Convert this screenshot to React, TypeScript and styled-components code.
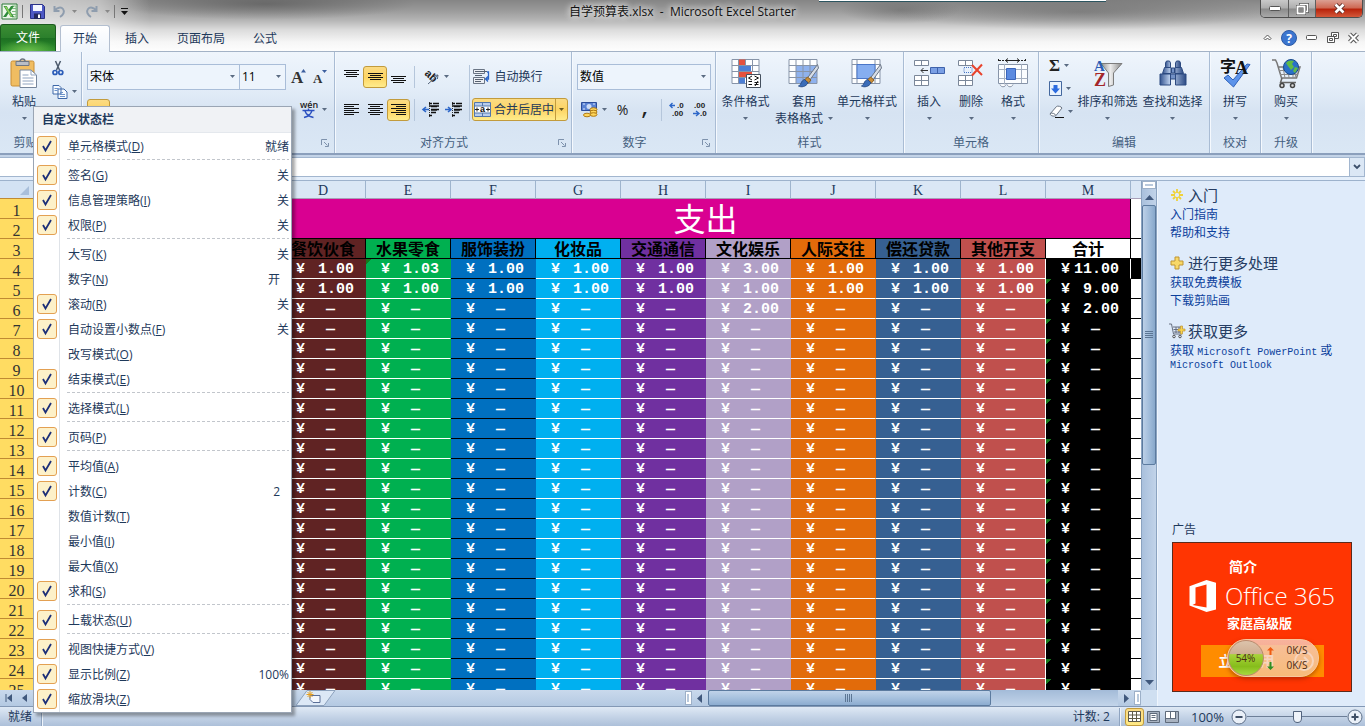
import React from "react";
import styled, { createGlobalStyle, css } from "styled-components";

const ui = `"Open Sans", "Noto Sans CJK SC", sans-serif`;
const mono = `"Liberation Mono", "Noto Sans CJK SC", monospace`;
const serif = `"Liberation Serif", "Noto Sans CJK SC", serif`;

const GlobalStyle = createGlobalStyle`
  *, *::before, *::after { box-sizing: border-box; }
  body { margin: 0; overflow: hidden; font: 12px/16px ${ui}; color: #1e395b; }
  button, select, input { font: inherit; color: inherit; margin: 0; }
  button { padding: 0; border: 0; background: none; }
  svg { display: block; flex: none; overflow: visible; }
`;

const Window = styled.div`
  position: relative;
  display: flex;
  flex-direction: column;
  height: 100vh;
  background: #dfebf9;
`;

/* ---------- title bar and tabs ---------- */

const Frame = styled.header`
  flex: none;
  background:
    linear-gradient(90deg, rgba(255, 255, 255, 0.62), rgba(255, 255, 255, 0.45) 100px, rgba(255, 255, 255, 0) 150px),
    radial-gradient(ellipse 150px 16px at 265px 4px, rgba(70, 70, 70, 0.5), transparent),
    radial-gradient(ellipse 60px 14px at 900px 10px, rgba(70, 70, 70, 0.35), transparent),
    radial-gradient(ellipse 190px 18px at 1080px 12px, rgba(80, 80, 80, 0.4), transparent),
    linear-gradient(#858585, #999 10px, #b4b4b4 20px, #dcdcdc 30px, #f6f6f6 42px, #fdfdfd);
`;

const TitleRow = styled.div`
  display: grid;
  grid-template-columns: 1fr auto 1fr;
  height: 24px;
`;

const QuickAccess = styled.div`
  display: flex;
  align-items: center;
  padding-left: 1px;
  height: 22px;
`;

const QuickButton = styled.button<{ $w: number }>`
  width: ${(p) => p.$w}px;
  height: 18px;
  display: flex;
  align-items: center;
  justify-content: center;
`;

const QuickRule = styled.span`
  width: 1px;
  height: 13px;
  background: #777;
  margin: 0 5px 0 4px;
`;

const Title = styled.h1`
  margin: 0;
  font: 400 12px/24px ${ui};
  color: #111;
  text-shadow: 0 0 6px #fff, 0 0 8px #fff;
  white-space: pre;
`;

const WindowButtons = styled.div`
  justify-self: end;
  display: flex;
  height: 18px;
  margin-right: 2px;
  border: 1px solid #4e4e4e;
  border-top: 0;
  border-radius: 0 0 5px 5px;
  overflow: hidden;
`;

const WindowButton = styled.button<{ $close?: boolean }>`
  display: flex;
  align-items: center;
  justify-content: center;
  width: ${(p) => (p.$close ? 47 : 27)}px;
  background: ${(p) =>
    p.$close ? "linear-gradient(#dba093, #cf6a55 45%, #b8240c 55%, #d4583a)" : "linear-gradient(#c9c9c9, #adadad 48%, #8a8a8a 52%, #a9a9a9)"};
  & + & { border-left: 1px solid #5e5e5e; }
`;

const TabRow = styled.nav`
  display: flex;
  align-items: flex-end;
  height: 27px;
  padding-right: 3px;
`;

const FileTab = styled.button`
  width: 56px;
  height: 27px;
  margin-right: 4px;
  border: 1px solid #1c5c1f;
  border-bottom: 0;
  border-radius: 3px 3px 0 0;
  color: #fff;
  background: radial-gradient(ellipse 30px 12px at 50% 100%, #6cc04a, transparent), linear-gradient(#3c8d33, #2b7f2c 50%, #1d7022 52%, #2f8f2e);
`;

const Tab = styled.button<{ $active?: boolean }>`
  height: 26px;
  padding: 0 12px;
  margin-right: 2px;
  border: 1px solid transparent;
  border-bottom: 0;
  border-radius: 3px 3px 0 0;
  ${(p) =>
    p.$active &&
    css`
      height: 27px;
      border-color: #b3bfd0;
      background: linear-gradient(#fff, #eff5fc);
      margin-bottom: -1px;
      position: relative;
    `}
`;

const TabTools = styled.div`
  display: flex;
  align-items: center;
  margin-left: auto;
  height: 27px;
`;

const ToolButton = styled.button`
  width: 22px;
  height: 22px;
  display: flex;
  align-items: center;
  justify-content: center;
  &:last-child { width: 18px; }
`;

/* ---------- ribbon ---------- */

const Ribbon = styled.div`
  flex: none;
  display: flex;
  height: 104px;
  border-top: 1px solid #a3b2c6;
  border-bottom: 2px solid #8b9fbc;
  background: linear-gradient(#eff5fc, #e3edf8 35%, #d6e3f2 60%, #dae7f5);
`;

const GroupBox = styled.section<{ $w: number }>`
  display: flex;
  flex-direction: column;
  flex: none;
  width: ${(p) => p.$w}px;
  border-right: 1px solid #a9bcd4;
  box-shadow: 1px 0 0 #f5f9fe;
`;

const GroupBody = styled.div<{ $pad?: number }>`
  display: flex;
  flex: 1;
  min-height: 0;
  padding-left: ${(p) => p.$pad ?? 0}px;
`;

const GroupName = styled.div`
  display: flex;
  align-items: center;
  height: 20px;
  color: #45607f;
  span { flex: 1; text-align: center; }
`;

const Launcher = styled.button`
  width: 18px;
  height: 16px;
  display: flex;
  align-items: center;
  justify-content: center;
`;

const BigButton = styled.button<{ $w: number }>`
  width: ${(p) => p.$w}px;
  display: flex;
  flex-direction: column;
  align-items: center;
  padding-top: 4px;
  white-space: nowrap;
`;

const BigIcon = styled.span`
  display: flex;
  align-items: center;
  justify-content: center;
  height: 34px;
  margin-bottom: 3px;
`;

const BigLabel = styled.span`
  display: flex;
  align-items: center;
  gap: 5px;
  height: 17px;
`;

const Rows = styled.div`
  display: flex;
  flex-direction: column;
  gap: 10px;
  padding-top: 13px;
`;

const Row = styled.div<{ $indent?: number }>`
  display: flex;
  align-items: center;
  height: 23px;
  padding-left: ${(p) => p.$indent ?? 0}px;
`;

const SmallButton = styled.button<{ $w?: number; $on?: boolean }>`
  display: flex;
  align-items: center;
  justify-content: center;
  gap: 4px;
  flex: none;
  width: ${(p) => p.$w ?? 23}px;
  height: 22px;
  border: 1px solid transparent;
  border-radius: 3px;
  white-space: nowrap;
  ${(p) =>
    p.$on &&
    css`
      border-color: #c29b3c;
      background: linear-gradient(#fbdb84, #fdd463 50%, #ffec8c);
    `}
`;

const SplitButton = styled.div`
  display: flex;
  width: 96px;
  height: 23px;
  border: 1px solid #c29b3c;
  border-radius: 3px;
  background: linear-gradient(#fbdb84, #fdd463 50%, #ffec8c);
  button { display: flex; align-items: center; justify-content: center; gap: 3px; }
  button:first-child { flex: 1; }
  button:last-child { width: 12px; border-left: 1px solid #c29b3c; }
`;

const Rule = styled.span<{ $tall?: boolean }>`
  flex: none;
  width: 1px;
  height: ${(p) => (p.$tall ? 56 : 22)}px;
  margin: ${(p) => (p.$tall ? "13px 2px 0 4px" : "0 4px")};
  background: #b5c6db;
`;

const ComboBox = styled.span<{ $w: number }>`
  display: grid;
  align-items: center;
  width: ${(p) => p.$w}px;
  height: 26px;
  border: 1px solid #a9bdd8;
  background: #edf4fc;
  color: #000;
  & + & { margin-left: -1px; }
  select {
    grid-area: 1 / 1;
    appearance: none;
    width: 100%;
    height: 24px;
    padding: 0 2px;
    border: 0;
    background: transparent;
  }
  svg { grid-area: 1 / 1; justify-self: end; margin-right: 4px; pointer-events: none; }
`;

const Glyph = styled.span<{ $size: number; $face?: string; $weight?: number }>`
  font: ${(p) => p.$weight ?? 700} ${(p) => p.$size}px/20px ${(p) => p.$face ?? ui};
  color: #222;
`;

const SideStack = styled.div<{ $w: number; $top: number }>`
  display: flex;
  flex-direction: column;
  gap: 2px;
  width: ${(p) => p.$w}px;
  padding-top: ${(p) => p.$top}px;
`;

const StackButton = styled.button`
  display: flex;
  align-items: center;
  justify-content: flex-start;
  gap: 4px;
  height: 21px;
  padding-left: 4px;
`;

/* ---------- formula bar ---------- */

const FormulaStrip = styled.div`
  flex: none;
  display: flex;
  height: 26px;
  padding: 2px 0 3px;
  background: #c3d3e7;
  border-bottom: 1px solid #9db2cc;
  box-shadow: inset 0 -4px 0 #e4eefa;
`;

const FormulaInput = styled.input`
  flex: 1;
  min-width: 0;
  border: 1px solid #a2b6cf;
  border-left: 0;
  background: #fff;
`;

const ExpandButton = styled.button`
  width: 15px;
  display: flex;
  align-items: center;
  justify-content: center;
  border: 1px solid #a2b6cf;
  border-left: 0;
  background: #dbe7f5;
`;

/* ---------- worksheet ---------- */

const Workspace = styled.main`
  display: flex;
  flex: 1;
  min-height: 0;
`;

const SheetColumn = styled.div`
  display: flex;
  flex-direction: column;
  flex: 1;
  min-width: 0;
`;

const SheetArea = styled.div`
  display: flex;
  flex: 1;
  min-height: 0;
`;

const GridView = styled.div`
  flex: 1;
  min-width: 0;
  overflow: hidden;
  background: #fff;
`;

const Grid = styled.table`
  table-layout: fixed;
  width: 1216px;
  border-collapse: separate;
  border-spacing: 0;
`;

const ColHead = styled.th`
  height: 18px;
  padding: 3px 0 0;
  border-right: 1px solid #9eb4cd;
  border-bottom: 1px solid #a8a0b8;
  background: #dae7f5;
  font: 400 14px/14px ${serif};
`;

const RowHead = styled.th`
  height: 20px;
  padding: 5px 0 0;
  border-right: 1px solid #a87c33;
  border-bottom: 1px solid #c08a33;
  background: #ffdc62;
  color: #333;
  font: 400 16px/14px ${serif};
`;

const Corner = styled.th`
  height: 18px;
  padding: 0 4px 3px 0;
  vertical-align: bottom;
  border-right: 1px solid #9eb4cd;
  border-bottom: 1px solid #c08a33;
  background: #d3e2f3;
  svg { margin-left: auto; }
`;

const BannerCell = styled.td`
  height: 40px;
  padding: 2px 0 0;
  background: #d90091;
  border-right: 1px solid #000;
  border-bottom: 1px solid #000;
  color: #fff;
  text-align: center;
  font: 400 32px/36px ${serif};
`;

const CategoryCell = styled.th<{ $bg: string }>`
  height: 20px;
  padding: 2px 0 0;
  border-right: 1px solid #000;
  border-bottom: 1px solid #000;
  background: ${(p) => p.$bg};
  color: #000;
  font: 700 16px/17px ${serif};
  white-space: nowrap;
`;

const MoneyCell = styled.td<{ $bg: string; $line: string; $edge?: string; $flag?: boolean }>`
  height: 20px;
  padding: 0;
  border-bottom: 1px solid ${(p) => p.$line};
  border-right: 1px solid ${(p) => p.$edge ?? p.$bg};
  background: ${(p) => (p.$flag ? "linear-gradient(135deg, #17781c 4px, transparent 4px)," : "")} ${(p) => p.$bg};
  color: #fff;
  font: 700 15px/16px ${mono};
`;

const Amount = styled.div<{ $empty: boolean }>`
  display: flex;
  justify-content: space-between;
  padding: 3px ${(p) => (p.$empty ? 30 : 11)}px 0 15px;
  height: 19px;
`;

const SpareCell = styled.td<{ $fill?: string }>`
  border-bottom: 1px solid #000;
  background: ${(p) => p.$fill ?? "#fff"};
  padding: 0;
`;

const ScrollTrack = styled.div`
  display: flex;
  flex-direction: column;
  align-items: center;
  width: 16px;
  border-left: 1px solid #8ba3c0;
  border-right: 1px solid #8ba3c0;
  background: linear-gradient(90deg, #a9c0dc, #c1d3e9);
`;

const SplitHandle = styled.span<{ $side?: boolean }>`
  flex: none;
  display: flex;
  align-items: center;
  justify-content: center;
  width: ${(p) => (p.$side ? 7 : 14)}px;
  height: ${(p) => (p.$side ? 14 : 8)}px;
  border: 1px solid #9db0c8;
  background: #fff;
  &::after {
    content: "";
    width: ${(p) => (p.$side ? 2 : 8)}px;
    height: ${(p) => (p.$side ? 8 : 2)}px;
    background: #b9c9dc;
  }
`;

const ScrollButton = styled.button`
  flex: none;
  width: 16px;
  height: 16px;
  display: flex;
  align-items: center;
  justify-content: center;
`;

const VThumb = styled.div`
  flex: 0 0 51%;
  width: 14px;
  margin-bottom: auto;
  border: 1px solid #5c7b9f;
  border-radius: 2px;
  background: linear-gradient(90deg, #bcd0e7, #9db9d8 60%, #88a8cb);
  display: flex;
  align-items: center;
  justify-content: center;
`;

const BottomBar = styled.div`
  flex: none;
  display: flex;
  align-items: center;
  height: 16px;
  background: linear-gradient(#c9d9ec, #b4c9e2);
`;

const SheetNav = styled.div`
  display: flex;
  flex: 3 0 0;
  min-width: 0;
  height: 16px;
  button { width: 16px; display: flex; align-items: center; justify-content: center; }
  button:last-child { width: 36px; margin-left: 264px; }
`;

const HScroll = styled.div`
  display: flex;
  align-items: center;
  flex: 2 0 0;
  min-width: 0;
  height: 16px;
`;

const HTrack = styled.div`
  flex: 1;
  height: 16px;
  background: linear-gradient(#a3bbd8, #c3d5ea);
`;

const HThumb = styled.div`
  width: 69%;
  height: 16px;
  border: 1px solid #5c7b9f;
  border-radius: 2px;
  background: linear-gradient(#c0d3e9, #a7c1de 50%, #8cacd0);
  display: flex;
  align-items: center;
  justify-content: center;
`;

const BarCorner = styled.span`
  width: 16px;
  height: 16px;
  background: #cfdff1;
`;

/* ---------- side pane ---------- */

const Pane = styled.aside`
  flex: none;
  display: flex;
  flex-direction: column;
  width: 208px;
  padding: 4px 13px 14px 12px;
  border-left: 1px solid #eef5fd;
  background: #dfebfa;
`;

const PaneHead = styled.h2`
  display: flex;
  align-items: center;
  gap: 4px;
  height: 20px;
  margin: 0;
  font: 400 15px/20px ${ui};
  color: #263d63;
`;

const PaneLinks = styled.div`
  display: flex;
  flex-direction: column;
  align-items: flex-start;
  padding: 1px 0 11px;
  a { color: #0b3f9c; line-height: 18px; text-decoration: none; }
`;

const StoreLink = styled.a`
  && { line-height: 12px; padding-top: 3px; }
  span { font: 10px/10px ${mono}; }
`;

const AdLabel = styled.p`
  margin: auto 0 4px 2px;
`;

const Ad = styled.section`
  flex: none;
  display: flex;
  flex-direction: column;
  align-items: center;
  height: 150px;
  margin-left: 2px;
  padding-top: 15px;
  border: 1px solid #5b2a1b;
  background: #ff3502;
  color: #fff;
`;

const AdIntro = styled.div`
  align-self: flex-start;
  margin-left: 56px;
  font: 700 14px/18px ${ui};
`;

const AdBrand = styled.div`
  display: flex;
  align-items: center;
  gap: 8px;
  height: 40px;
  font: 300 24px/40px ${ui};
  white-space: nowrap;
`;

const AdEdition = styled.div`
  align-self: flex-start;
  margin-left: 54px;
  font: 700 13px/14px ${ui};
`;

const AdAction = styled.div`
  position: relative;
  width: 123px;
  margin-top: 15px;
`;

const TryButton = styled.button`
  display: flex;
  align-items: center;
  justify-content: space-between;
  width: 123px;
  height: 32px;
  padding: 0 10px 0 18px;
  background: #ff8c00;
  color: #fff;
  font: 700 14px/18px ${ui};
`;

const SpeedWidget = styled.div`
  position: absolute;
  left: 26px;
  top: -6px;
  display: flex;
  align-items: center;
  width: 92px;
  height: 38px;
  padding-right: 10px;
  border: 1px solid #f7c9a0;
  border-radius: 19px;
  background: linear-gradient(rgba(246, 199, 182, 0.86), rgba(244, 204, 164, 0.74));
  box-shadow: 0 2px 4px rgba(120, 30, 0, 0.5);
  color: #4a2a14;
`;

const Ball = styled.div`
  flex: none;
  width: 36px;
  height: 36px;
  border: 1px solid #b98a6c;
  border-radius: 50%;
  background: linear-gradient(#dcc3ab, #cfae92 38%, #a8d23a 40%, #86bd1b 75%, #a6d840);
  font: 10px/34px ${ui};
  text-align: center;
`;

const Speeds = styled.div`
  flex: 1;
  padding-left: 3px;
  div { display: flex; align-items: center; justify-content: space-between; font: 10px/15px ${ui}; }
`;

/* ---------- status bar ---------- */

const StatusBar = styled.footer`
  flex: none;
  display: flex;
  align-items: center;
  height: 20px;
  padding: 0 2px 0 8px;
  border-top: 1px solid #8398b5;
  background: linear-gradient(#dfe9f5, #c5d4e7 50%, #adc0d9);
`;

const StatusRule = styled.span`
  width: 2px;
  height: 18px;
  margin: 0 4px 0 9px;
  background: #8fa4c0;
  border-right: 1px solid #eef4fb;
`;

const StatusCount = styled.span`
  margin-left: auto;
`;

const ViewButton = styled.button<{ $on?: boolean }>`
  width: 19px;
  height: 18px;
  display: flex;
  align-items: center;
  justify-content: center;
  border: 1px solid ${(p) => (p.$on ? "#c29b3c" : "transparent")};
  border-radius: 3px;
  background: ${(p) => (p.$on ? "linear-gradient(#fbdb84, #ffe985)" : "none")};
`;

const ZoomButton = styled.button`
  width: 16px;
  height: 16px;
`;

const ZoomLabel = styled.span`
  margin: 0 7px 0 9px;
  font-size: 13px;
`;

const ZoomSlider = styled.input`
  appearance: none;
  width: 100px;
  height: 16px;
  background: linear-gradient(#6d7f98, #6d7f98) center / 100% 1px no-repeat;
  &::-webkit-slider-thumb {
    appearance: none;
    width: 9px;
    height: 12px;
    background: #eef3fa;
    border: 1px solid #51637d;
    border-radius: 1px 1px 5px 5px;
  }
`;

/* ---------- status bar menu ---------- */

const Menu = styled.form`
  position: absolute;
  left: 33px;
  top: 106px;
  width: 259px;
  padding-bottom: 1px;
  border: 1px solid #9aa5b4;
  background: linear-gradient(90deg, #fff 25px, #dfe3e8 25px, #dfe3e8 26px, #fff 26px);
  box-shadow: 3px 3px 3px rgba(0, 0, 0, 0.35);
`;

const MenuTitle = styled.h2`
  margin: 0;
  height: 26px;
  padding-left: 8px;
  border-bottom: 1px solid #e4e8ed;
  background: #f0f2f5;
  font: 600 12px/26px ${ui};
`;

const MenuItem = styled.label<{ $inset?: boolean }>`
  display: flex;
  align-items: center;
  height: 25px;
  padding: 0 ${(p) => (p.$inset ? 11 : 2)}px 0 3px;
  white-space: nowrap;
  output { margin-left: auto; }
  output, span + span, span:nth-child(2) { line-height: 14px; padding-top: 2px; }
`;

const MenuRule = styled.hr`
  height: 4px;
  margin: 0 2px 0 33px;
  border: 0;
  background: repeating-linear-gradient(90deg, #c2c6cc 0 3px, transparent 3px 5px) 0 1px / 100% 1px no-repeat;
`;

const CheckSlot = styled.span`
  display: grid;
  place-items: center;
  width: 20px;
  height: 20px;
  margin-right: 11px;
  input {
    grid-area: 1 / 1;
    appearance: none;
    width: 20px;
    height: 20px;
    border-radius: 3px;
  }
  input:checked { border: 1px solid #e3a052; background: #fdf1c9; }
  svg { grid-area: 1 / 1; pointer-events: none; }
`;

/* ---------- drawings ---------- */

const Svg = ({ w, h, children }: { w: number; h: number; children: React.ReactNode }) => (
  <svg width={w} height={h} viewBox={`0 0 ${w} ${h}`} fill="none" aria-hidden="true">
    {children}
  </svg>
);

const Arrow = ({ c = "#5a6b82" }: { c?: string }) => (
  <Svg w={5} h={3}><path d="M0 0h5L2.5 3z" fill={c} /></Svg>
);

const Triangle = ({ dir }: { dir: "up" | "down" | "left" | "right" }) => {
  const d = { up: "M4.500 2L9 7H0z", down: "M0 2h9L4.500 7z", left: "M2 4.500L7 0v9z", right: "M7 4.500L2 0v9z" }[dir];
  return <Svg w={9} h={9}><path d={d} fill="#40587c" /></Svg>;
};

const ExcelLogo = () => (
  <Svg w={17} h={17}>
    <path d="M1 1h15v15H1z" fill="#eef7ea" stroke="#2d7a38" />
    <path d="M11 3h4v11h-4M11 5.500h4M11 8.500h4M11 11.500h4" stroke="#7cb87f" />
    <path d="M2.500 3h3.200l2 3.600L10 3h3L9.300 8.400 13 14H9.700L7.500 10.200 5.200 14H2l4-5.600z" fill="#2e8b3a" />
    <path d="M3.500 3.500h2l6 10h-1.800z" fill="#8fd05c" />
  </Svg>
);

const SaveIcon = () => (
  <Svg w={15} h={15}>
    <path d="M.5.500h12l2 2v12H.5z" fill="#4e59c4" stroke="#2a3186" />
    <path d="M3 1h9v6H3z" fill="#f4f6ff" />
    <path d="M4 9.500h7V15H4z" fill="#23285e" />
    <path d="M8 10.500h2V14H8z" fill="#fff" />
  </Svg>
);

const UndoIcon = ({ flip }: { flip?: boolean }) => (
  <Svg w={13} h={13}>
    <g transform={flip ? "matrix(-1 0 0 1 13 0)" : undefined}>
      <path d="M1.500 1v5h5M2 5.500C4 2.500 8 1.500 10 4c2 2.500.5 6-3 8" stroke="#8f9dae" strokeWidth="2" />
    </g>
  </Svg>
);

const PasteIcon = () => (
  <Svg w={28} h={31}>
    <rect x="1" y="3" width="23" height="25" rx="1.500" fill="#f0bd62" stroke="#c98e35" />
    <path d="M6 3.500h13v4H6z" fill="#b9bec6" stroke="#6f7782" />
    <path d="M10 3.500a2.500 2.500 0 0 1 5 0" stroke="#6f7782" strokeWidth="1.500" />
    <path d="M10 12h11l5.500 5v12.500H10z" fill="#fff" stroke="#76869c" />
    <path d="M21 12v5h5.500M12.500 17h6M12.500 20h11M12.500 23h11M12.500 26h11" stroke="#8fa3bf" />
  </Svg>
);

const CutIcon = () => (
  <Svg w={12} h={15}>
    <path d="M3.500 0l4 9M8.500 0l-4 9" stroke="#4c5a6c" strokeWidth="1.500" />
    <circle cx="3" cy="11.500" r="2" stroke="#2b5cb8" strokeWidth="1.700" />
    <circle cx="8.800" cy="11.500" r="2" stroke="#2b5cb8" strokeWidth="1.700" />
  </Svg>
);

const CopyIcon = () => (
  <Svg w={16} h={14}>
    <path d="M1 .5h6l2 2V9H1zM6 4h6l3 3v6.500H6z" fill="#f7fbff" stroke="#3e68a8" />
    <path d="M2.500 3.500h4M2.500 5.500h3M8 7.500h3M8 9.500h5M8 11.500h5" stroke="#6d93ca" />
  </Svg>
);

const FontSizeIcon = ({ up }: { up?: boolean }) => (
  <Svg w={15} h={16}>
    <text x="0" y="14" fontFamily="Liberation Serif" fontWeight="700" fontSize={up ? 17 : 13} fill="#333">A</text>
    <path d={up ? "M10 3.500h5L12.500 0z" : "M9 1h5L11.500 4z"} fill="#3c5f9e" />
  </Svg>
);

const Lines = ({ rows }: { rows: [number, number, number][] }) => (
  <Svg w={15} h={14}>
    {rows.map(([x, y, w]) => (
      <path key={y} d={`M${x} ${y + 0.5}h${w}`} stroke="#111" />
    ))}
  </Svg>
);

const block = (x: number): [number, number, number][] =>
  [0, 1, 2, 3, 4, 5].map((i) => [i % 2 ? x : 0, 1 + i * 2, i % 2 ? 10 : 15]);

const OrientIcon = () => (
  <Svg w={17} h={16}>
    <text x="0" y="8" fontFamily="Liberation Sans" fontWeight="700" fontSize="11" fill="#222" transform="rotate(42 4 8)">ab</text>
    <path d="M5 15L15 6M15 6l-4 .6M15 6l-.6 4" stroke="#56657c" />
  </Svg>
);

const IndentIcon = ({ right }: { right?: boolean }) => (
  <Svg w={17} h={15}>
    <path d="M7 1.500h3M11 1.500h6M7 4h10M9 4.500h6M9 7.500h8M9 8h6M9 10.500h5M7 13.500h3" stroke="#111" strokeWidth="1.500" />
    <path d={right ? "M0 7.500h5M3 5l3 2.500L3 10" : "M7 7.500H1M4 5L1 7.500 4 10"} stroke="#2c66c8" strokeWidth="1.600" />
    <path d="M7.500 0v15" stroke="#333" strokeDasharray="1 1" />
  </Svg>
);

const WrapIcon = () => (
  <Svg w={17} h={16}>
    <path d="M.5.500h11v4H.5zM.5 8.500h11v6H.5z" fill="#eceff4" stroke="#6a7585" />
    <path d="M2 2.500h12M2 6.500h7M2 10.500h8M2 12.500h6" stroke="#55606e" />
    <path d="M14 3h1.500v7H13M15 7.500L12.500 10l2.500 2.500" stroke="#2c66c8" strokeWidth="1.300" />
  </Svg>
);

const MergeIcon = () => (
  <Svg w={17} h={15}>
    <path d="M.5.500h16v14H.5z" fill="#fff" stroke="#5276ab" />
    <path d="M1 1h15v3H1zM1 11h15v3H1z" fill="#b8cdec" />
    <path d="M.5 4h16M.5 11h16M8.500 1v3M8.500 11v3" stroke="#5276ab" />
    <path d="M1 7.500h4M3 5.500v4M12 7.500h4M14 5.500v4" stroke="#222" />
    <text x="6" y="10" fontFamily="Liberation Sans" fontWeight="700" fontSize="9" fill="#111">a</text>
  </Svg>
);

const MoneyIcon = () => (
  <Svg w={17} h={17}>
    <path d="M.5 1.500h15v8H.5z" fill="#5b83d3" stroke="#2c4d9a" />
    <circle cx="8" cy="5.500" r="2.500" fill="#cfdef7" />
    <path d="M2 3h2M12 3h2M2 8h2" stroke="#dbe6fa" />
    <ellipse cx="12.500" cy="8.500" rx="3.500" ry="1.800" fill="#ffd65a" stroke="#b07a14" />
    <ellipse cx="12.500" cy="11" rx="3.500" ry="1.800" fill="#ffd65a" stroke="#b07a14" />
    <ellipse cx="12.500" cy="13.500" rx="3.500" ry="1.800" fill="#ffd65a" stroke="#b07a14" />
    <ellipse cx="6" cy="14" rx="3.500" ry="1.800" fill="#ffd65a" stroke="#b07a14" />
  </Svg>
);

const DecimalIcon = ({ less }: { less?: boolean }) => (
  <Svg w={17} h={15}>
    <text x={less ? 2 : 8} y="6" fontFamily="Liberation Sans" fontWeight="700" fontSize="8" fill="#222">{less ? ".00" : ".0"}</text>
    <text x={less ? 8 : 3} y="14" fontFamily="Liberation Sans" fontWeight="700" fontSize="8" fill="#222">{less ? ".0" : ".00"}</text>
    <path d={less ? "M1 11.500h5M4 9l3 2.500L4 14" : "M6 3.500H1M3.500 1L1 3.500 3.500 6"} stroke="#2c66c8" strokeWidth="1.400" />
  </Svg>
);

const PhoneticIcon = () => (
  <Svg w={18} h={18}>
    <text x="0" y="7" fontFamily="Open Sans" fontWeight="600" fontSize="9" fill="#222">wén</text>
    <path d="M2.500 9.500h12M8.500 7.500v2M4 16.500c4-1 7-3.500 8-7M5 10c1 3 4 5.500 8.500 6.500" stroke="#2b50c0" strokeWidth="1.400" />
  </Svg>
);

const LauncherIcon = () => (
  <Svg w={8} h={8}>
    <path d="M.5 6V.5H6M3 3l3.500 3.500M7.500 4v3.500H4" stroke="#7e92ad" />
  </Svg>
);

const ConditionalIcon = () => (
  <Svg w={30} h={30}>
    <path d="M1 1.500h27v24H1z" fill="#fdfeff" stroke="#8794a8" />
    <path d="M8 1.500h7v6H8zM8 13.500h13v6H8z" fill="#e5513e" />
    <path d="M8 7.500h12v6H8zM8 19.500h6v6H8z" fill="#4d7fd4" />
    <path d="M1 7.500h27M1 13.500h27M1 19.500h27M7.500 1.500v24M14.500 1.500v6M21.500 1.500v12" stroke="#8794a8" />
    <path d="M15.500 16.500h14v13h-14z" fill="#fff" stroke="#45505e" />
    <path d="M21 18l-3.500 2 3.500 2M17.500 23.500H21M23.500 18l4 2-4 2M17.500 26.500H21M23.500 24.500h4M23.500 26.500h4M27 23l-3 5" stroke="#111" />
  </Svg>
);

const Brush = () => (
  <>
    <path d="M29.500 6.500L19 20.500l2.500 2L30.500 10z" fill="#d7dde6" stroke="#6b7686" />
    <path d="M19.500 19l3.500 3-2.500 3-4-3z" fill="#c98e3a" stroke="#8a5d1d" />
    <path d="M10.500 28c3-1 2-5 6-6.500l3.500 3.300C18 29 13 29.500 10.500 28z" fill="#3a6cb8" stroke="#2a4e88" />
  </>
);

const TableStyleIcon = () => (
  <Svg w={32} h={30}>
    <path d="M1 1.500h28v24H1z" fill="#fdfeff" />
    <path d="M8 7.500h21v18H8z" fill="#8fb2ee" />
    <path d="M1 1.500h28v24H1zM1 7.500h28M1 13.500h28M1 19.500h28M8 1.500v24M15 1.500v24M22 1.500v24" stroke="#8794a8" />
    <Brush />
  </Svg>
);

const CellStyleIcon = () => (
  <Svg w={32} h={30}>
    <path d="M1 1.500h28v24H1z" fill="#fdfeff" />
    <path d="M1 1.500h28v24H1zM1 6.500h28M1 20.500h28M6 1.500v24M24 1.500v24" stroke="#8794a8" />
    <path d="M6 6.500h18v14H6z" fill="#86aef0" stroke="#4a76c8" />
    <Brush />
  </Svg>
);

const InsertCellIcon = () => (
  <Svg w={31} h={28}>
    <path d="M.5 1.500h14v5H.5zM7.500 1.500v5M.5 16.500h14v10H.5zM7.500 16.500v10M.5 21.500h14" fill="#fff" stroke="#7b8799" />
    <path d="M16.500 8.500h14v6h-14zM23.500 8.500v6" fill="#7a9fe4" stroke="#3f62ab" />
    <path d="M14 11.500H7M9.500 9L7 11.500 9.500 14" stroke="#333" />
  </Svg>
);

const DeleteCellIcon = () => (
  <Svg w={26} h={28}>
    <path d="M.5 1.500h14v5H.5zM7.500 1.500v5M.5 16.500h14v10H.5zM7.500 16.500v10M.5 21.500h14" fill="#fff" stroke="#7b8799" />
    <path d="M6 8.500h8v5H6z" stroke="#4673c4" strokeDasharray="1 1" />
    <path d="M14 6l10 10M24 5.500L14 16.500" stroke="#e8432d" strokeWidth="2" />
  </Svg>
);

const FormatCellIcon = () => (
  <Svg w={31} h={30}>
    <path d="M.5 1v3M27.500 1v3M1 2.500h7M20 2.500h7" stroke="#222" strokeDasharray="2 1" />
    <path d="M7 2.500h15M10 .5L7.500 2.500l2.500 2M19 .5l2.500 2-2.500 2" stroke="#222" />
    <path d="M.5 6.500h29v19H.5z" fill="#fbfdff" stroke="#8794a8" />
    <path d="M6.500 6v23M23.500 6v19M.5 11.500h29M.5 20.500h29" stroke="#a5b0c1" />
    <path d="M8.500 10.500h9v11h-9z" fill="#5b8ae0" stroke="#3a65bb" />
    <path d="M2 26.500c1 3 5 3 6 0M9 26.500c1 3 5 3 6 0" fill="#fff" stroke="#8794a8" />
  </Svg>
);

const FillIcon = () => (
  <Svg w={13} h={15}>
    <path d="M.5.500h12v14H.5z" fill="#e9f2fd" stroke="#44689f" />
    <path d="M4.500 4h4v3.500H11L6.500 12.500 2 7.500h2.500z" fill="#2b6be0" />
  </Svg>
);

const EraserIcon = () => (
  <Svg w={15} h={13}>
    <path d="M1 9L7.500 1.500c1-1 5 0 5.500 1.500L7 10.500c-1 1-5 1-6-1.500z" fill="#fff" stroke="#6a7585" />
    <path d="M1 8.500c2-1 5 0 6 2" stroke="#6a7585" />
    <path d="M6 12.500h9" stroke="#111" />
  </Svg>
);

const SortIcon = () => (
  <Svg w={30} h={30}>
    <defs>
      <linearGradient id="funnel" x1="0" x2="1">
        <stop stopColor="#8d8d8d" />
        <stop offset=".45" stopColor="#ececec" />
        <stop offset="1" stopColor="#8a8a8a" />
      </linearGradient>
    </defs>
    <path d="M8 5.500h21L20.500 15v12l-5 1.500V15z" fill="url(#funnel)" stroke="#7c7c7c" />
    <text x="1" y="13" fontFamily="Liberation Serif" fontWeight="700" fontSize="15" fill="#2a5cb4">A</text>
    <text x="1" y="28" fontFamily="Liberation Serif" fontWeight="700" fontSize="18" fill="#a3262a">Z</text>
  </Svg>
);

const FindIcon = () => (
  <Svg w={28} h={28}>
    <defs>
      <linearGradient id="barrel" x1="0" x2="1">
        <stop stopColor="#34548f" />
        <stop offset=".4" stopColor="#c3d6f2" />
        <stop offset="1" stopColor="#2c4a84" />
      </linearGradient>
    </defs>
    <path d="M5.500 8.500h6.500v6H3.500zM16 8.500h6.500l2 6H16z" fill="url(#barrel)" stroke="#2d4a80" />
    <path d="M6.500 4l1-2h3l1 2v4.500h-5zM16.500 4l1-2h3l1 2v4.500h-5z" fill="url(#barrel)" stroke="#2d4a80" />
    <path d="M1 15h10.500v11H1zM16.500 15H27v11H16.500z" fill="url(#barrel)" stroke="#2d4a80" />
    <path d="M11.500 15h5v5h-5zM12.500 9h3v5h-3z" fill="#7391c6" stroke="#2d4a80" />
  </Svg>
);

const SpellIcon = () => (
  <Svg w={30} h={32}>
    <path d="M4 21l4-3 5 5L27 7l3 .5L13.500 30z" fill="#5c93ea" stroke="#2f62ba" />
    <text x="0" y="15" fontFamily="Noto Sans CJK SC" fontWeight="700" fontSize="16" fill="#111">字</text>
    <text x="15" y="17" fontFamily="Liberation Serif" fontWeight="700" fontSize="18" fill="#111">A</text>
  </Svg>
);

const CartIcon = () => (
  <Svg w={30} h={31}>
    <path d="M1 2h3.500l1.500 3 4.500 15h15L29 9H7" stroke="#777" strokeWidth="1.500" />
    <path d="M8 12.500h20M9 16.500h18M12 9l2 11M17 9l1 11M22 9v11M26 9l-2 11" stroke="#8a8a8a" />
    <path d="M11 20l-1.500 4.500H25" stroke="#666" strokeWidth="1.500" />
    <circle cx="20" cy="9" r="7.500" fill="#2a70c8" stroke="#1a4a8c" />
    <path d="M15 5c2-3 6-3 8-2l-2 3 2 3-3 3-3-4zM24 9l3 1-3 5-2-2z" fill="#5fba46" />
    <circle cx="11" cy="27.500" r="2" fill="#ddd" stroke="#444" strokeWidth="1.500" />
    <circle cx="21.500" cy="27.500" r="2" fill="#ddd" stroke="#444" strokeWidth="1.500" />
  </Svg>
);

const OfficeLogo = () => (
  <Svg w={28} h={32}>
    <path d="M17.500 0L27 2.800v26.600L17.500 32 .5 25.500V6.300zM17.500 4.500L6.500 7.500v16l-3 1.500 14 2.500z" fill="#fff" fillRule="evenodd" />
  </Svg>
);

/* ---------- ribbon assembly ---------- */

const Group = ({ w, name, pad, launcher, children }: { w: number; name: string; pad?: number; launcher?: boolean; children: React.ReactNode }) => (
  <GroupBox $w={w} aria-label={name}>
    <GroupBody $pad={pad}>{children}</GroupBody>
    <GroupName>
      <span>{name}</span>
      {launcher && <Launcher aria-label={name + "设置"}><LauncherIcon /></Launcher>}
    </GroupName>
  </GroupBox>
);

const Big = ({ w, icon, label, second }: { w: number; icon: React.ReactNode; label: string; second?: string }) => (
  <BigButton $w={w}>
    <BigIcon>{icon}</BigIcon>
    <BigLabel>{label}</BigLabel>
    <BigLabel>{second}<Arrow /></BigLabel>
  </BigButton>
);

const Combo = ({ w, value, label }: { w: number; value: string; label: string }) => (
  <ComboBox $w={w}>
    <select aria-label={label} defaultValue={value}><option>{value}</option></select>
    <Arrow />
  </ComboBox>
);

const RibbonBar = () => (
  <Ribbon>
    <Group w={82} name="剪贴板" launcher>
      <Big w={48} icon={<PasteIcon />} label="粘贴" />
      <SideStack $w={30} $top={6}>
        <StackButton aria-label="剪切"><CutIcon /></StackButton>
        <StackButton aria-label="复制"><CopyIcon /><Arrow /></StackButton>
      </SideStack>
    </Group>
    <Group w={253} name="字体" pad={5} launcher>
      <Rows>
        <Row>
          <Combo w={153} value="宋体" label="字体" />
          <Combo w={47} value="11" label="字号" />
          <SmallButton $w={24} aria-label="增大字号"><FontSizeIcon up /></SmallButton>
          <SmallButton $w={20} aria-label="减小字号"><FontSizeIcon /></SmallButton>
        </Row>
        <Row>
          <SmallButton $on aria-label="加粗" />
          <Row $indent={185}>
            <SmallButton $w={36} aria-label="拼音"><PhoneticIcon /><Arrow /></SmallButton>
          </Row>
        </Row>
      </Rows>
    </Group>
    <Group w={237} name="对齐方式" pad={5} launcher>
      <Rows>
        <Row>
          <SmallButton aria-label="顶端对齐"><Lines rows={[[0, 0, 15], [2, 2, 11], [0, 4, 15], [2, 6, 11]]} /></SmallButton>
          <SmallButton $on $w={24} aria-label="垂直居中"><Lines rows={[[0, 3, 15], [2, 5, 11], [0, 7, 15], [2, 9, 11]]} /></SmallButton>
          <SmallButton aria-label="底端对齐"><Lines rows={[[0, 6, 15], [2, 8, 11], [0, 10, 15], [2, 12, 11]]} /></SmallButton>
          <Rule />
          <SmallButton $w={34} aria-label="方向"><OrientIcon /><Arrow /></SmallButton>
        </Row>
        <Row>
          <SmallButton aria-label="左对齐"><Lines rows={block(0)} /></SmallButton>
          <SmallButton $w={24} aria-label="居中"><Lines rows={block(2)} /></SmallButton>
          <SmallButton $on aria-label="右对齐"><Lines rows={block(5)} /></SmallButton>
          <Rule />
          <SmallButton aria-label="减少缩进"><IndentIcon /></SmallButton>
          <SmallButton aria-label="增加缩进"><IndentIcon right /></SmallButton>
        </Row>
      </Rows>
      <Rule $tall />
      <Rows>
        <Row><SmallButton $w={72}><WrapIcon />自动换行</SmallButton></Row>
        <Row>
          <SplitButton>
            <button><MergeIcon />合并后居中</button>
            <button aria-label="合并选项"><Arrow c="#6b5a20" /></button>
          </SplitButton>
        </Row>
      </Rows>
    </Group>
    <Group w={144} name="数字" pad={5} launcher>
      <Rows>
        <Row><Combo w={134} value="数值" label="数字格式" /></Row>
        <Row>
          <SmallButton $w={34} aria-label="会计数字格式"><MoneyIcon /><Arrow /></SmallButton>
          <SmallButton aria-label="百分比"><Glyph $size={14} $weight={400}>%</Glyph></SmallButton>
          <SmallButton aria-label="千位分隔"><Glyph $size={18} $face={mono}>,</Glyph></SmallButton>
          <Rule />
          <SmallButton aria-label="增加小数位数"><DecimalIcon /></SmallButton>
          <SmallButton aria-label="减少小数位数"><DecimalIcon less /></SmallButton>
        </Row>
      </Rows>
    </Group>
    <Group w={188} name="样式" pad={2}>
      <Big w={55} icon={<ConditionalIcon />} label="条件格式" />
      <Big w={62} icon={<TableStyleIcon />} label="套用" second="表格格式" />
      <Big w={64} icon={<CellStyleIcon />} label="单元格样式" />
    </Group>
    <Group w={135} name="单元格" pad={4}>
      <Big w={42} icon={<InsertCellIcon />} label="插入" />
      <Big w={42} icon={<DeleteCellIcon />} label="删除" />
      <Big w={42} icon={<FormatCellIcon />} label="格式" />
    </Group>
    <Group w={171} name="编辑" pad={6}>
      <SideStack $w={30} $top={3}>
        <StackButton aria-label="自动求和"><Glyph $size={17} $face={serif}>Σ</Glyph><Arrow /></StackButton>
        <StackButton aria-label="填充"><FillIcon /><Arrow /></StackButton>
        <StackButton aria-label="清除"><EraserIcon /><Arrow /></StackButton>
      </SideStack>
      <Big w={65} icon={<SortIcon />} label="排序和筛选" />
      <Big w={65} icon={<FindIcon />} label="查找和选择" />
    </Group>
    <Group w={51} name="校对"><Big w={50} icon={<SpellIcon />} label="拼写" /></Group>
    <Group w={51} name="升级"><Big w={50} icon={<CartIcon />} label="购买" /></Group>
  </Ribbon>
);

/* ---------- worksheet data ---------- */

type Column = { letter: string; name: string; bg: string; line: string; first: string[] };

const columns: Column[] = [
  { letter: "D", name: "餐饮伙食", bg: "#602323", line: "#fff", first: ["1.00", "1.00"] },
  { letter: "E", name: "水果零食", bg: "#00b050", line: "#fff", first: ["1.03", "1.00"] },
  { letter: "F", name: "服饰装扮", bg: "#0070c0", line: "#000", first: ["1.00", "1.00"] },
  { letter: "G", name: "化妆品", bg: "#00b0f0", line: "#fff", first: ["1.00", "1.00"] },
  { letter: "H", name: "交通通信", bg: "#7030a0", line: "#fff", first: ["1.00", "1.00"] },
  { letter: "I", name: "文化娱乐", bg: "#b1a0c7", line: "#fff", first: ["3.00", "1.00", "2.00"] },
  { letter: "J", name: "人际交往", bg: "#e26b0a", line: "#fff", first: ["1.00", "1.00"] },
  { letter: "K", name: "偿还贷款", bg: "#366092", line: "#fff", first: ["1.00", "1.00"] },
  { letter: "L", name: "其他开支", bg: "#c0504d", line: "#fff", first: ["1.00", "1.00"] },
  { letter: "M", name: "合计", bg: "#000000", line: "#000", first: ["11.00", "9.00", "2.00"] },
];

const moneyRows = Array.from({ length: 22 }, (_, i) => i);

const Worksheet = () => (
  <GridView>
    <Grid>
      <colgroup>
        <col style={{ width: 34 }} />
        <col style={{ width: 247 }} />
        {columns.map((c) => <col key={c.letter} style={{ width: 85 }} />)}
        <col style={{ width: 85 }} />
      </colgroup>
      <thead>
        <tr>
          <Corner><Svg w={9} h={9}><path d="M9 0v9H0z" fill="#a9bfdb" /></Svg></Corner>
          <ColHead />
          {columns.map((c) => <ColHead key={c.letter} scope="col">{c.letter}</ColHead>)}
          <ColHead />
        </tr>
      </thead>
      <tbody>
        <tr>
          <RowHead scope="row">1</RowHead>
          <td rowSpan={2} />
          <BannerCell colSpan={10} rowSpan={2}>支出</BannerCell>
          <SpareCell rowSpan={2} />
        </tr>
        <tr><RowHead scope="row">2</RowHead></tr>
        <tr>
          <RowHead scope="row">3</RowHead>
          <td />
          {columns.map((c) => (
            <CategoryCell key={c.letter} $bg={c.letter === "M" ? "#fff" : c.bg}>{c.name}</CategoryCell>
          ))}
          <SpareCell />
        </tr>
        {moneyRows.map((i) => (
          <tr key={i}>
            <RowHead scope="row">{i + 4}</RowHead>
            <td />
            {columns.map((c) => {
              const value = c.first[i];
              const flag = (c.letter === "M" && i > 0) || (c.letter === "E" && i === 0);
              const edge = c.letter === "L" || (c.letter === "M" && i === 0) ? "#fff" : undefined;
              return (
                <MoneyCell key={c.letter} $bg={c.bg} $line={c.line} $edge={edge} $flag={flag}>
                  <Amount $empty={!value}><span>¥</span><span>{value ?? "—"}</span></Amount>
                </MoneyCell>
              );
            })}
            <SpareCell $fill={i === 0 ? "#000" : undefined} />
          </tr>
        ))}
      </tbody>
    </Grid>
  </GridView>
);

/* ---------- menu data ---------- */

type Item = { text: string; k: string; on?: boolean; value?: string; inset?: boolean };

const menuSections: Item[][] = [
  [{ text: "单元格模式", k: "D", on: true, value: "就绪" }],
  [
    { text: "签名", k: "G", on: true, value: "关" },
    { text: "信息管理策略", k: "I", on: true, value: "关" },
    { text: "权限", k: "P", on: true, value: "关" },
  ],
  [
    { text: "大写", k: "K", value: "关" },
    { text: "数字", k: "N", value: "开", inset: true },
    { text: "滚动", k: "R", on: true, value: "关" },
    { text: "自动设置小数点", k: "F", on: true, value: "关" },
    { text: "改写模式", k: "O" },
    { text: "结束模式", k: "E", on: true },
  ],
  [{ text: "选择模式", k: "L", on: true }],
  [{ text: "页码", k: "P", on: true }],
  [
    { text: "平均值", k: "A", on: true },
    { text: "计数", k: "C", on: true, value: "2", inset: true },
    { text: "数值计数", k: "T" },
    { text: "最小值", k: "I" },
    { text: "最大值", k: "X" },
    { text: "求和", k: "S", on: true },
  ],
  [{ text: "上载状态", k: "U", on: true }],
  [
    { text: "视图快捷方式", k: "V", on: true },
    { text: "显示比例", k: "Z", on: true, value: "100%" },
    { text: "缩放滑块", k: "Z", on: true },
  ],
];

const StatusMenu = () => (
  <Menu>
    <MenuTitle>自定义状态栏</MenuTitle>
    {menuSections.map((section, s) => (
      <React.Fragment key={s}>
        {s > 0 && <MenuRule />}
        {section.map((item) => (
          <MenuItem key={item.text} $inset={item.inset}>
            <CheckSlot>
              <input type="checkbox" defaultChecked={item.on} />
              {item.on && <Svg w={10} h={12}><path d="M1 6l2.500 4.500L9 1" stroke="#1c2f78" strokeWidth="1.800" /></Svg>}
            </CheckSlot>
            <span>{item.text}(<u>{item.k}</u>)</span>
            {item.value && <output>{item.value}</output>}
          </MenuItem>
        ))}
      </React.Fragment>
    ))}
  </Menu>
);

const PeekWindow = styled.div`
  position: absolute;
  top: 0;
  left: 60%;
  width: 21%;
  height: 2px;
  background: #fff;
  border-bottom: 1px solid #2c5560;
`;

export default function App() {
  return (
    <Window>
      <GlobalStyle />
      <Frame>
        <TitleRow>
          <QuickAccess>
            <ExcelLogo />
            <QuickRule />
            <QuickButton $w={18} aria-label="保存"><SaveIcon /></QuickButton>
            <QuickButton $w={26} aria-label="撤消"><UndoIcon /></QuickButton>
            <QuickButton $w={5} aria-label="撤消选项"><Arrow c="#888" /></QuickButton>
            <QuickButton $w={28} aria-label="恢复"><UndoIcon flip /></QuickButton>
            <QuickButton $w={5} aria-label="恢复选项"><Arrow c="#888" /></QuickButton>
            <QuickRule />
            <QuickButton $w={8} aria-label="自定义">
              <Svg w={7} h={7}><path d="M0 .5h7" stroke="#111" /><path d="M0 3h7L3.500 7z" fill="#111" /></Svg>
            </QuickButton>
          </QuickAccess>
          <Title>自学预算表.xlsx  -  Microsoft Excel Starter</Title>
          <WindowButtons>
            <WindowButton aria-label="最小化"><Svg w={12} h={5}><rect x=".5" y=".5" width="11" height="4" rx="1" fill="#fff" stroke="#555" /></Svg></WindowButton>
            <WindowButton aria-label="还原">
              <Svg w={13} h={12}><path d="M4.500 1.500h7v7h-7z" stroke="#555" strokeWidth="3" /><path d="M4.500 1.500h7v7h-7z" stroke="#fff" strokeWidth="1.500" /><path d="M1.500 3.500h7v7h-7z" fill="#888" stroke="#444" strokeWidth="3" /><path d="M1.500 3.500h7v7h-7z" stroke="#fff" strokeWidth="2" /></Svg>
            </WindowButton>
            <WindowButton $close aria-label="关闭">
              <Svg w={13} h={11}><path d="M2.500 1.500l8 8M10.500 1.500l-8 8" stroke="#5b2a25" strokeWidth="4.500" /><path d="M2.500 1.500l8 8M10.500 1.500l-8 8" stroke="#fff" strokeWidth="2.600" /></Svg>
            </WindowButton>
          </WindowButtons>
        </TitleRow>
        <TabRow>
          <FileTab>文件</FileTab>
          <Tab $active>开始</Tab>
          <Tab>插入</Tab>
          <Tab>页面布局</Tab>
          <Tab>公式</Tab>
          <TabTools>
            <ToolButton aria-label="折叠功能区"><Svg w={9} h={7}><path d="M4.500 1L1 4.500 2.500 6l2-2 2 2L8 4.500z" fill="#fff" stroke="#555" /></Svg></ToolButton>
            <ToolButton aria-label="帮助">
              <Svg w={16} h={16}><circle cx="8" cy="8" r="7.500" fill="#3b75cf" stroke="#2d5aa5" /><text x="8" y="12.500" textAnchor="middle" fontFamily="Open Sans" fontWeight="700" fontSize="12" fill="#fff">?</text></Svg>
            </ToolButton>
            <ToolButton aria-label="最小化工作簿"><Svg w={11} h={5}><rect x=".5" y=".5" width="10" height="4" rx="1" fill="#fff" stroke="#555" /></Svg></ToolButton>
            <ToolButton aria-label="还原工作簿"><Svg w={12} h={11}><path d="M4.500.500h7v6h-7zM6.500 2.500h3v2h-3z" fill="#fff" stroke="#555" /><path d="M.5 4.500h7v6h-7zM2.500 6.500h3v2h-3z" fill="#fff" stroke="#555" /></Svg></ToolButton>
            <ToolButton aria-label="关闭工作簿"><Svg w={11} h={10}><path d="M1.500 1l8 8M9.500 1l-8 8" stroke="#555" strokeWidth="4" /><path d="M1.500 1l8 8M9.500 1l-8 8" stroke="#fff" strokeWidth="2" /></Svg></ToolButton>
          </TabTools>
        </TabRow>
      </Frame>
      <RibbonBar />
      <FormulaStrip>
        <FormulaInput aria-label="编辑栏" />
        <ExpandButton aria-label="展开编辑栏"><Svg w={8} h={6}><path d="M1 1l3 3 3-3" stroke="#3c4f6b" strokeWidth="1.800" /></Svg></ExpandButton>
      </FormulaStrip>
      <Workspace>
        <SheetColumn>
          <SheetArea>
            <Worksheet />
            <ScrollTrack>
              <SplitHandle />
              <ScrollButton aria-label="向上滚动"><Triangle dir="up" /></ScrollButton>
              <VThumb><Svg w={8} h={8}><path d="M0 .5h8M0 2.500h8M0 4.500h8M0 6.500h8" stroke="#5c7694" /></Svg></VThumb>
              <ScrollButton aria-label="向下滚动"><Triangle dir="down" /></ScrollButton>
            </ScrollTrack>
          </SheetArea>
          <BottomBar>
            <SheetNav>
              <button aria-label="第一张工作表"><Svg w={7} h={8}><path d="M1 0v8" stroke="#40587c" /><path d="M7 0v8L2 4z" fill="#40587c" /></Svg></button>
              <button aria-label="上一张工作表"><Svg w={5} h={8}><path d="M5 0v8L0 4z" fill="#40587c" /></Svg></button>
              <button aria-label="插入工作表">
                <Svg w={36} h={16}>
                  <path d="M0 15.500L11 .5h28l-11 15z" fill="#dce8f6" stroke="#8da2bd" />
                  <path d="M14 5.500h10v7h-7l-3-3z" fill="#f3f7fd" stroke="#5a6f97" />
                  <path d="M14 1v7M10.500 4.500h7M11.500 2l5 5M16.500 2l-5 5" stroke="#e7a020" />
                </Svg>
              </button>
            </SheetNav>
            <HScroll>
              <SplitHandle $side />
              <ScrollButton aria-label="向左滚动"><Triangle dir="left" /></ScrollButton>
              <HTrack>
                <HThumb><Svg w={8} h={8}><path d="M.5 0v8M2.500 0v8M4.500 0v8M6.500 0v8" stroke="#5c7694" /></Svg></HThumb>
              </HTrack>
              <ScrollButton aria-label="向右滚动"><Triangle dir="right" /></ScrollButton>
              <SplitHandle $side />
            </HScroll>
            <BarCorner />
          </BottomBar>
        </SheetColumn>
        <Pane>
          <PaneHead>
            <Svg w={14} h={14}><path d="M7 1v4M7 9v4M1 7h4M9 7h4M3 3l2.500 2.500M8.500 8.500L11 11M11 3L8.500 5.500M5.500 8.500L3 11" stroke="#efd23a" strokeWidth="1.800" /></Svg>
            入门
          </PaneHead>
          <PaneLinks><a href="#guide">入门指南</a><a href="#help">帮助和支持</a></PaneLinks>
          <PaneHead>
            <Svg w={14} h={14}><path d="M5 1h4v4h4v4H9v4H5V9H1V5h4z" fill="#f8d868" stroke="#bf9433" /></Svg>
            进行更多处理
          </PaneHead>
          <PaneLinks><a href="#templates">获取免费模板</a><a href="#clipart">下载剪贴画</a></PaneLinks>
          <PaneHead>
            <Svg w={14} h={16}>
              <path d="M-1 1h2.500l2 10H12M3 4h8M3.500 6.500H11M4 9h8M6 4v6M9 4v6" stroke="#666f80" />
              <circle cx="4" cy="13.500" r="1.300" stroke="#555" /><circle cx="10" cy="13.500" r="1.300" stroke="#555" />
              <path d="M10.500 3h2v3h2.500v2h-2.500v3h-2V8H8V6h2.500z" fill="#f8d44c" stroke="#bf9433" strokeWidth=".7" />
            </Svg>
            获取更多
          </PaneHead>
          <PaneLinks>
            <StoreLink href="#office">获取 <span>Microsoft PowerPoint</span> 或<br /><span>Microsoft Outlook</span></StoreLink>
          </PaneLinks>
          <AdLabel>广告</AdLabel>
          <Ad>
            <AdIntro>简介</AdIntro>
            <AdBrand><OfficeLogo />Office 365</AdBrand>
            <AdEdition>家庭高级版</AdEdition>
            <AdAction>
              <TryButton>立即试用<Svg w={20} h={20}><circle cx="10" cy="10" r="9" stroke="#fff" strokeWidth="2" /><path d="M5 10h9M10 6l4 4-4 4" stroke="#fff" strokeWidth="2" /></Svg></TryButton>
              <SpeedWidget>
                <Ball>54%</Ball>
                <Speeds>
                  <div><Svg w={7} h={8}><path d="M3.500 0L7 3.500H4.500V8h-2V3.500H0z" fill="#f05a10" /></Svg>0K/S</div>
                  <div><Svg w={7} h={8}><path d="M3.500 8L0 4.500h2.500V0h2v4.500H7z" fill="#2f8f22" /></Svg>0K/S</div>
                </Speeds>
              </SpeedWidget>
            </AdAction>
          </Ad>
        </Pane>
      </Workspace>
      <StatusBar>
        <span>就绪</span>
        <StatusRule />
        <StatusCount>计数: 2</StatusCount>
        <StatusRule />
        <ViewButton $on aria-label="普通"><Svg w={13} h={11}><path d="M.5.500h12v10H.5zM.5 4h12M.5 7.500h12M4.500.500v10M8.500.500v10" fill="#fff" stroke="#5e5a48" /></Svg></ViewButton>
        <ViewButton aria-label="页面布局"><Svg w={13} h={12}><path d="M.5.500h12v11H.5z" fill="#a9b3c1" stroke="#5f6b7b" /><path d="M3 2.500h7v7H3z" fill="#fff" stroke="#5f6b7b" /><path d="M4.500 4.500h4M4.500 6.500h4" stroke="#5f6b7b" /></Svg></ViewButton>
        <ViewButton aria-label="分页预览"><Svg w={14} h={12}><path d="M.5.500h13v11H.5z" fill="#a9b3c1" stroke="#5f6b7b" /><path d="M1 1h4v6H1zM6 1h4v6H6z" fill="#fff" /><path d="M5.500 1v7M10.500 1v7M1 7.500h9" stroke="#5f6b7b" /></Svg></ViewButton>
        <ZoomLabel>100%</ZoomLabel>
        <ZoomButton aria-label="缩小"><Svg w={16} h={16}><circle cx="8" cy="8" r="7" fill="#eaf0f8" stroke="#5e7089" /><path d="M4.500 8h7" stroke="#3f4f66" strokeWidth="2" /></Svg></ZoomButton>
        <ZoomSlider type="range" aria-label="显示比例" defaultValue={50} />
        <ZoomButton aria-label="放大"><Svg w={16} h={16}><circle cx="8" cy="8" r="7" fill="#eaf0f8" stroke="#5e7089" /><path d="M4.500 8h7M8 4.500v7" stroke="#3f4f66" strokeWidth="2" /></Svg></ZoomButton>
      </StatusBar>
      <StatusMenu />
      <PeekWindow />
    </Window>
  );
}
